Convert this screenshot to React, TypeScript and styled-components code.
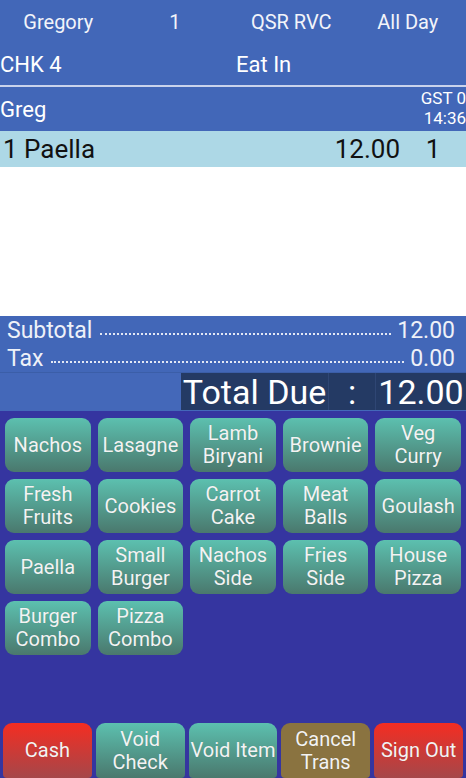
import React from "react";
import styled, { createGlobalStyle, css } from "styled-components";

const GlobalStyle = createGlobalStyle`
  html, body {
    margin: 0;
    padding: 0;
    background: #3535a0;
  }
  body {
    font-family: Roboto, "Noto Sans", "Liberation Sans", sans-serif;
  }
  * {
    box-sizing: border-box;
  }
`;

const Screen = styled.div`
  width: 466px;
  height: 778px;
  display: flex;
  flex-direction: column;
  background: #3535a0;
  overflow: hidden;
  color: #ffffff;
`;

const InfoBar = styled.div`
  height: 43px;
  display: grid;
  grid-template-columns: repeat(4, 1fr);
  align-items: center;
  background: #4267b8;
  font-size: 20px;
  color: #f2f4fa;
`;

const InfoCell = styled.div`
  text-align: center;
`;

const CheckBar = styled.div`
  height: 44px;
  display: grid;
  grid-template-columns: 236px 1fr;
  align-items: center;
  background: #4267b8;
  font-size: 22px;
  border-bottom: 2px solid #c9d3ec;
`;

const GuestBar = styled.div`
  height: 44px;
  display: flex;
  align-items: center;
  justify-content: space-between;
  background: #4267b8;
  font-size: 22px;
`;

const GuestInfo = styled.div`
  font-size: 17px;
  line-height: 20px;
  text-align: right;
  margin-top: -2px;
`;

const ItemRow = styled.div`
  height: 36px;
  display: flex;
  align-items: center;
  background: #add8e6;
  color: #111111;
  font-size: 26px;
  padding-left: 3px;
`;

const ItemName = styled.div`
  flex: 1;
`;

const ItemPrice = styled.div`
  text-align: right;
`;

const ItemQty = styled.div`
  width: 66px;
  text-align: center;
`;

const OrderArea = styled.div`
  height: 149px;
  background: #ffffff;
`;

const Summary = styled.div`
  background: #4267b8;
  padding: 0 11px 0 7px;
`;

const SummaryLine = styled.div`
  height: 28px;
  display: flex;
  align-items: center;
  font-size: 23px;
  color: #eef1f8;
`;

const Leader = styled.div`
  flex: 1;
  align-self: flex-end;
  margin: 0 6px 9px 8px;
  border-bottom: 2px dotted rgba(255, 255, 255, 0.85);
`;

const TotalRow = styled.div`
  height: 39px;
  display: flex;
  background: #4468b9;
  border-top: 1px solid #3b5ea8;
`;

const TotalBox = styled.div`
  margin-left: auto;
  width: 285px;
  height: 37px;
  display: flex;
  background: #243a64;
  font-size: 34px;
`;

const TotalCell = styled.div<{ $w?: number; $last?: boolean }>`
  ${(p) => (p.$w ? css`width: ${p.$w}px;` : css`flex: 1;`)}
  display: flex;
  align-items: center;
  justify-content: center;
  line-height: 1;
  ${(p) => !p.$last && css`border-right: 1px solid #2f4674;`}
`;

const Keypad = styled.div`
  flex: 1;
  display: flex;
  flex-direction: column;
  padding: 7px 5px 0;
`;

const MenuGrid = styled.div`
  display: grid;
  grid-template-columns: repeat(5, 1fr);
  grid-auto-rows: 54px;
  column-gap: 7px;
  row-gap: 7px;
`;

const tones = {
  teal: "linear-gradient(to bottom, #5cc0af 0%, #4a786d 100%)",
  red: "linear-gradient(to bottom, #f42d22 0%, #a5474a 100%)",
  brown: "#8a7340",
};

type Tone = keyof typeof tones;

const Key = styled.button<{ $tone: Tone }>`
  border: none;
  border-radius: 9px;
  background: ${(p) => tones[p.$tone]};
  color: #f3f3f3;
  font-family: Roboto, "Noto Sans", "Liberation Sans", sans-serif;
  font-size: 20px;
  line-height: 23px;
  padding: 0;
  text-align: center;
  white-space: pre-line;
  display: flex;
  align-items: center;
  justify-content: center;
  text-shadow: 0 0 1px rgba(0, 0, 0, 0.15);
`;

const ActionBar = styled.div`
  margin-top: auto;
  margin-left: -2px;
  margin-right: -2px;
  height: 55px;
  display: grid;
  grid-template-columns: repeat(5, 1fr);
  column-gap: 4px;
`;

const ActionKey = styled(Key)`
  border-radius: 9px 9px 4px 4px;
  height: 55px;
  white-space: pre;
`;

const menuItems = [
  "Nachos",
  "Lasagne",
  "Lamb\nBiryani",
  "Brownie",
  "Veg\nCurry",
  "Fresh\nFruits",
  "Cookies",
  "Carrot\nCake",
  "Meat\nBalls",
  "Goulash",
  "Paella",
  "Small\nBurger",
  "Nachos\nSide",
  "Fries\nSide",
  "House\nPizza",
  "Burger\nCombo",
  "Pizza\nCombo",
];

const actions: { label: string; tone: Tone }[] = [
  { label: "Cash", tone: "red" },
  { label: "Void\nCheck", tone: "teal" },
  { label: "Void Item", tone: "teal" },
  { label: "Cancel\nTrans", tone: "brown" },
  { label: "Sign Out", tone: "red" },
];

const App = () => (
  <>
    <GlobalStyle />
    <Screen>
      <InfoBar>
        <InfoCell>Gregory</InfoCell>
        <InfoCell>1</InfoCell>
        <InfoCell>QSR RVC</InfoCell>
        <InfoCell>All Day</InfoCell>
      </InfoBar>
      <CheckBar>
        <div>CHK 4</div>
        <div>Eat In</div>
      </CheckBar>
      <GuestBar>
        <div>Greg</div>
        <GuestInfo>
          GST 0
          <br />
          14:36
        </GuestInfo>
      </GuestBar>
      <ItemRow>
        <ItemName>1 Paella</ItemName>
        <ItemPrice>12.00</ItemPrice>
        <ItemQty>1</ItemQty>
      </ItemRow>
      <OrderArea />
      <Summary>
        <SummaryLine>
          <span>Subtotal</span>
          <Leader />
          <span>12.00</span>
        </SummaryLine>
        <SummaryLine>
          <span>Tax</span>
          <Leader />
          <span>0.00</span>
        </SummaryLine>
      </Summary>
      <TotalRow>
        <TotalBox>
          <TotalCell $w={148}>Total Due</TotalCell>
          <TotalCell $w={47}>:</TotalCell>
          <TotalCell $last>12.00</TotalCell>
        </TotalBox>
      </TotalRow>
      <Keypad>
        <MenuGrid>
          {menuItems.map((item) => (
            <Key key={item} $tone="teal">
              {item}
            </Key>
          ))}
        </MenuGrid>
        <ActionBar>
          {actions.map((a) => (
            <ActionKey key={a.label} $tone={a.tone}>
              {a.label}
            </ActionKey>
          ))}
        </ActionBar>
      </Keypad>
    </Screen>
  </>
);

export default App;
